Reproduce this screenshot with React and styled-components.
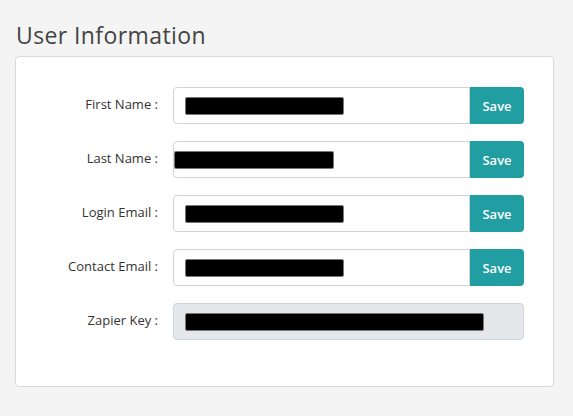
import React from 'react'
import styled, {createGlobalStyle} from 'styled-components'

const GlobalStyle = createGlobalStyle`
	body {
		margin: 0;
		background: #f4f4f4;
		font-family: 'Open Sans', 'Liberation Sans', sans-serif;
	}
`

const Page = styled.div`
	padding: 22px 19px 0 15px;
`

const Title = styled.h2`
	margin: 0 0 8px 1px;
	font-size: 23px;
	line-height: 26px;
	font-weight: 400;
	color: #444;
	letter-spacing: 0.4px;
`

const Card = styled.div`
	background: #fff;
	border: 1px solid #d9d9d9;
	border-radius: 4px;
	padding: 30px 29px 46px 0;
	display: grid;
	grid-template-columns: 142px 1fr;
	column-gap: 15px;
	row-gap: 17px;
	align-items: center;
`

const Label = styled.label`
	text-align: right;
	font-size: 13px;
	color: #333;
	margin-top: -3px;
`

const Group = styled.div`
	display: flex;
	height: 37px;
`

const Field = styled.div`
	flex: 1;
	display: flex;
	align-items: center;
	padding-left: ${p => p.$indent}px;
	background: ${p => (p.$disabled ? '#e4e8eb' : '#fff')};
	border: 1px solid #cfd4d9;
	border-radius: ${p => (p.$disabled ? '4px' : '4px 0 0 4px')};
`

const Redacted = styled.span`
	display: block;
	height: 16px;
	background: #000;
	box-shadow: 0 0 0 1px #777;
	border-radius: 1px;
`

const SaveButton = styled.button`
	width: 54px;
	border: none;
	border-radius: 0 4px 4px 0;
	background: #209ea1;
	color: #fff;
	font-family: inherit;
	font-size: 13px;
	font-weight: 600;
	cursor: pointer;
`

const rows = [
	{label: 'First Name :', indent: 12, width: 157},
	{label: 'Last Name :', indent: 1, width: 158},
	{label: 'Login Email :', indent: 12, width: 157},
	{label: 'Contact Email :', indent: 12, width: 157},
]

const App = () => (
	<Page>
		<GlobalStyle />
		<Title>User Information</Title>
		<Card>
			{rows.map(row => (
				<React.Fragment key={row.label}>
					<Label>{row.label}</Label>
					<Group>
						<Field $indent={row.indent}>
							<Redacted style={{width: row.width}} />
						</Field>
						<SaveButton>Save</SaveButton>
					</Group>
				</React.Fragment>
			))}
			<Label>Zapier Key :</Label>
			<Group>
				<Field $indent={12} $disabled>
					<Redacted style={{width: 297}} />
				</Field>
			</Group>
		</Card>
	</Page>
)

export default App
